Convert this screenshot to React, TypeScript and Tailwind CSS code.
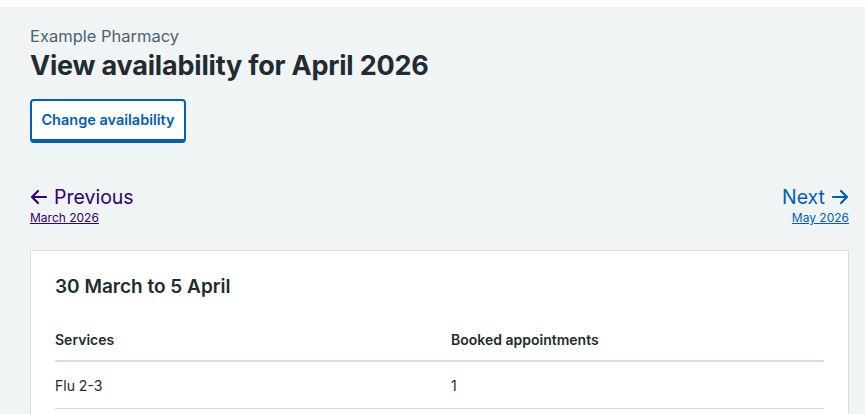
export default function App() {
  return (
    <div className="min-h-screen bg-white pt-[7px] font-['Inter',sans-serif] text-[#212b32]">
      <div className="min-h-[407px] bg-[#f0f4f5] pl-[30px] pr-[16px] pt-[17px]">
        <p className="text-[16.5px] leading-[24px] text-[#4c6272]">Example Pharmacy</p>
        <h1 className="mt-[1px] text-[27px] font-bold leading-[34px] tracking-[-0.2px]">
          View availability for April 2026
        </h1>

        <button className="mt-[16px] h-[44px] w-[156px] rounded-[4px] border-2 border-b-4 border-[#005eb8] bg-white text-[14.5px] font-semibold text-[#005eb8]">
          Change availability
        </button>

        <div className="mt-[41px] flex items-start justify-between">
          <a href="#" className="flex flex-col text-[#330072]">
            <span className="flex items-center gap-[6px] text-[19.5px] leading-[26px]">
              <svg width="18" height="18" viewBox="0 0 18 18" fill="none" stroke="currentColor" strokeWidth="2.2" strokeLinecap="round" strokeLinejoin="round">
                <path d="M16 9H2M8 3 2 9l6 6" />
              </svg>
              Previous
            </span>
            <span className="text-[12px] leading-[16px] underline">March 2026</span>
          </a>
          <a href="#" className="flex flex-col items-end text-[#005eb8]">
            <span className="flex items-center gap-[6px] text-[19.5px] leading-[26px]">
              Next
              <svg width="18" height="18" viewBox="0 0 18 18" fill="none" stroke="currentColor" strokeWidth="2.2" strokeLinecap="round" strokeLinejoin="round">
                <path d="M2 9h14M10 3l6 6-6 6" />
              </svg>
            </span>
            <span className="text-[12px] leading-[16px] underline">May 2026</span>
          </a>
        </div>

        <div className="mt-[24px] border border-[#d8dde0] bg-white px-[24px] pt-[23px] pb-[24px]">
          <h2 className="text-[19px] font-semibold leading-[26px]">30 March to 5 April</h2>
          <table className="mt-[29px] w-full text-left text-[14px]">
            <thead>
              <tr className="border-b-2 border-[#d8dde0]">
                <th className="w-[396px] pb-[10px] font-semibold">Services</th>
                <th className="pb-[10px] font-semibold">Booked appointments</th>
              </tr>
            </thead>
            <tbody>
              <tr className="border-b border-[#d8dde0]">
                <td className="pt-[13px] pb-[12px]">Flu 2-3</td>
                <td className="pt-[13px] pb-[12px]">1</td>
              </tr>
            </tbody>
          </table>
        </div>
      </div>
    </div>
  );
}
